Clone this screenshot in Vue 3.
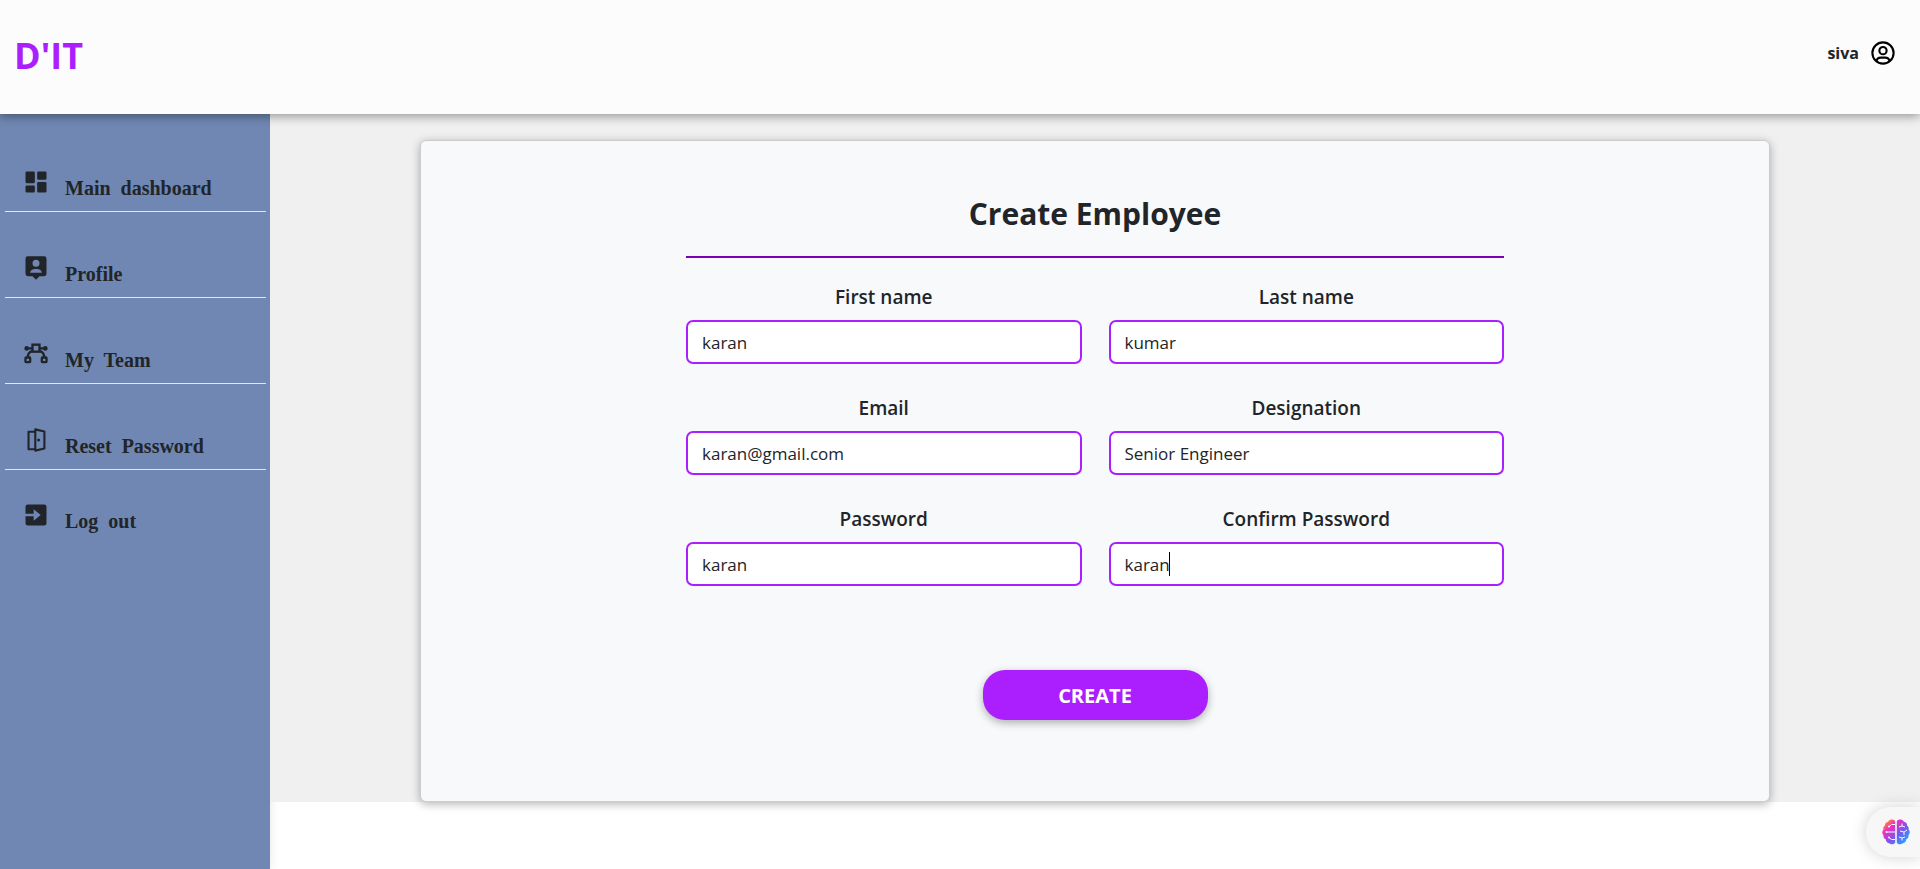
<script setup>
import { ref } from 'vue'

const menu = [
  { label: 'Main  dashboard', icon: 'dashboard' },
  { label: 'Profile', icon: 'profile' },
  { label: 'My  Team', icon: 'team' },
  { label: 'Reset  Password', icon: 'door' },
  { label: 'Log  out', icon: 'logout' }
]

const fields = ref([
  { id: 'first-name', label: 'First name', value: 'karan' },
  { id: 'last-name', label: 'Last name', value: 'kumar' },
  { id: 'email', label: 'Email', value: 'karan@gmail.com' },
  { id: 'designation', label: 'Designation', value: 'Senior Engineer' },
  { id: 'password', label: 'Password', value: 'karan' },
  { id: 'confirm-password', label: 'Confirm Password', value: 'karan', active: true }
])
</script>

<template>
  <div class="page">
    <header class="topbar">
      <a class="logo" href="#">D'IT</a>
      <div class="user">
        <span>siva</span>
        <svg class="icon" viewBox="0 0 24 24" fill="none" stroke="#000" stroke-width="1.8" aria-hidden="true">
          <circle cx="12" cy="12" r="9.1" />
          <circle cx="12" cy="10" r="3.1" />
          <path d="M6.4 18.6C6.9 16.9 8.2 16 10 16h4c1.8 0 3.1.9 3.6 2.6" />
        </svg>
      </div>
    </header>

    <div class="body">
      <nav class="sidebar">
        <ul>
          <li v-for="item in menu" :key="item.icon">
            <a href="#">
              <svg class="icon" viewBox="0 0 24 24" fill="currentColor" aria-hidden="true">
                <path v-if="item.icon === 'dashboard'" d="M4 13h6a1 1 0 0 0 1-1V4a1 1 0 0 0-1-1H4a1 1 0 0 0-1 1v8a1 1 0 0 0 1 1zm-1 7a1 1 0 0 0 1 1h6a1 1 0 0 0 1-1v-4a1 1 0 0 0-1-1H4a1 1 0 0 0-1 1v4zm10 0a1 1 0 0 0 1 1h6a1 1 0 0 0 1-1v-7a1 1 0 0 0-1-1h-6a1 1 0 0 0-1 1v7zm1-10h6a1 1 0 0 0 1-1V4a1 1 0 0 0-1-1h-6a1 1 0 0 0-1 1v5a1 1 0 0 0 1 1z" />
                <path v-else-if="item.icon === 'profile'" fill-rule="evenodd" d="M5 2h14a2 2 0 0 1 2 2v13a2 2 0 0 1-2 2h-4l-3 3-3-3H5a2 2 0 0 1-2-2V4a2 2 0 0 1 2-2zM12 5a3 3 0 1 0 0 6 3 3 0 0 0 0-6zM7 16h10c0-1.9-2.2-3.2-5-3.2S7 14.1 7 16z" />
                <g v-else-if="item.icon === 'team'" fill="none" stroke="currentColor" stroke-width="2">
                  <rect x="9" y="4" width="6" height="6" />
                  <rect x="3" y="15" width="4" height="4" rx="0.5" />
                  <rect x="17" y="15" width="4" height="4" rx="0.5" />
                  <path d="M4 7.2h5M15 7.2h5M5 15c0-3.2 1.4-5 4.2-5.6M19 15c0-3.2-1.4-5-4.2-5.6" />
                  <circle cx="4" cy="7.2" r="1" />
                  <circle cx="20" cy="7.2" r="1" />
                </g>
                <g v-else-if="item.icon === 'door'">
                  <path fill="none" stroke="currentColor" stroke-width="1.8" stroke-linejoin="round" d="M11 4.9H5.6v15H11M11.400 2.900l7.800 1.800v14.600l-7.800 1.800z" />
                  <circle cx="14.200" cy="12" r="1.300" />
                </g>
                <path v-else fill-rule="evenodd" d="M5 3h14a2 2 0 0 1 2 2v14a2 2 0 0 1-2 2H5a2 2 0 0 1-2-2v-6h7v4l6-5-6-5v4H3V5a2 2 0 0 1 2-2z" />
              </svg>
              <span>{{ item.label }}</span>
            </a>
          </li>
        </ul>
      </nav>

      <main>
        <form class="card" @submit.prevent>
          <div class="content">
            <h1>Create Employee</h1>
            <div class="fields">
              <div v-for="field in fields" :key="field.id" class="field">
                <label :for="field.id">{{ field.label }}</label>
                <div class="control">
                  <input :id="field.id" v-model="field.value" type="text" />
                  <span v-if="field.active" class="caret" />
                </div>
              </div>
            </div>
            <button class="create" type="submit">CREATE</button>
          </div>
        </form>
      </main>
    </div>

    <button class="assistant" type="button" aria-label="Assistant">
      <svg viewBox="0 0 28 26" aria-hidden="true">
        <defs>
          <linearGradient id="brain" x1="0" y1="0" x2="1" y2="1">
            <stop offset="0.08" stop-color="#ff9a1f" />
            <stop offset="0.3" stop-color="#f02fc2" />
            <stop offset="0.58" stop-color="#7c55ee" />
            <stop offset="0.9" stop-color="#20a8ff" />
          </linearGradient>
        </defs>
        <path fill="url(#brain)" d="M13.2 2.500C12.800.9 11 .2 9.300.6 7.700.8 6.700 1.500 6.200 2.700 4 3 2.600 4.500 2.900 6.700 1.300 7.700.9 9.300 1.500 10.500-.2 12-.1 14.700 1.500 16c-.4 2 .5 3.600 2.200 4.200.2 2.500 2 4 4 4.200 1.800 1.500 4.900 1.100 5.500-1.200zM14.800 2.500c.4-1.600 2.200-2.300 3.900-1.900 1.600.2 2.600.9 3.100 2.100 2.200.3 3.600 1.800 3.300 4 1.600 1 2 2.600 1.400 3.800 1.700 1.500 1.600 4.200 0 5.500.4 2-.5 3.600-2.200 4.200-.2 2.500-2 4-4 4.200-1.800 1.500-4.900 1.100-5.500-1.200z" />
        <g fill="none" stroke="#f7f7f7" stroke-width="1">
          <path d="M13.2 5.500H9.500L7 7.800M13.200 13H4.500M13.200 20.500H9.500L7 18.500M17 8l3-1 3 1M20 7V4.500M18 12l4 1 3-2M22 13v3M17 18l3 1 3-1M20 19v2.500" />
        </g>
        <g fill="#f7f7f7"><circle cx="7" cy="7.5" r="1" /><circle cx="4.5" cy="13" r="1" /><circle cx="7" cy="18.5" r="1" /></g>
      </svg>
    </button>
  </div>
</template>

<style>
body {
  background: #fff;
}
</style>

<style scoped>
.page {
  display: flex;
  flex-direction: column;
  min-height: 100vh;
  color: #212529;
  font-family: "Open Sans", "Noto Sans", sans-serif;
}
.page * {
  box-sizing: border-box;
}
.icon {
  width: 28px;
  height: 28px;
  flex: none;
}
.topbar {
  position: relative;
  z-index: 1;
  display: flex;
  justify-content: space-between;
  align-items: center;
  min-height: 114px;
  padding: 0 23px 2px 14px;
  background: #fcfcfc;
  box-shadow: 0 2px 10px rgba(0, 0, 0, 0.4);
}
.logo {
  color: #ab1fff;
  font-size: 36px;
  line-height: 48px;
  font-weight: 700;
  text-decoration: none;
}
.user {
  display: flex;
  align-items: center;
  gap: 10px;
  padding-bottom: 6px;
  font-size: 16px;
  line-height: 24px;
  font-weight: 700;
}
.body {
  display: flex;
  flex: 1;
}
.sidebar {
  flex: none;
  width: 270px;
  padding: 12px 4px 0 5px;
  background: #6f87b2;
  box-shadow: 0 0 10px rgba(0, 0, 0, 0.1);
}
.sidebar ul {
  margin: 0;
  padding: 0;
  list-style: none;
}
.sidebar a {
  display: flex;
  align-items: flex-end;
  gap: 15px;
  height: 86px;
  padding: 0 17px 7px;
  border-bottom: 1px solid #e4e6ea;
  color: #212529;
  font-family: "Liberation Serif", serif;
  font-size: 20px;
  line-height: 32px;
  font-weight: 700;
  text-decoration: none;
  white-space: pre;
}
.sidebar a .icon {
  margin-bottom: 8px;
}
.sidebar li:last-child a {
  height: 74px;
  border-bottom: 0;
}
main {
  flex: 1;
  align-self: flex-start;
  padding: 26px 150px 0;
  background: #f0f0f0;
}
.card {
  padding: 54px 24px 81px;
  border: 1px solid #ccc;
  border-radius: 6px;
  background: #f8f9fb;
  box-shadow: 0 2px 10px rgba(0, 0, 0, 0.3);
}
.content {
  display: flex;
  flex-direction: column;
  max-width: 818px;
  margin: 0 auto;
}
h1 {
  margin: 0 0 25px;
  padding-bottom: 23px;
  border-bottom: 2px solid #7b00b8;
  font-size: 30px;
  line-height: 38px;
  font-weight: 700;
  text-align: center;
}
.fields {
  display: grid;
  grid-template-columns: 1fr 1fr;
  gap: 30px 27px;
}
.field {
  display: flex;
  flex-direction: column;
  gap: 9px;
}
label {
  font-size: 19px;
  line-height: 28px;
  font-weight: 600;
  text-align: center;
}
.control {
  position: relative;
}
input {
  display: block;
  width: 100%;
  height: 44px;
  padding: 0 14px;
  border: 2px solid #ab1fff;
  border-radius: 7px;
  outline: 0;
  background: #fff;
  color: #212529;
  font-family: inherit;
  font-size: 17px;
  font-weight: 400;
}
.caret {
  position: absolute;
  top: 10px;
  left: 60px;
  width: 1px;
  height: 24px;
  background: #000;
}
.create {
  align-self: center;
  width: 225px;
  height: 50px;
  margin-top: 84px;
  padding: 0;
  border: 0;
  border-radius: 22px;
  background: #ab1fff;
  box-shadow: 0 3px 8px rgba(0, 0, 0, 0.3);
  color: #fff;
  font-family: inherit;
  font-size: 20px;
  font-weight: 700;
}
.assistant {
  position: fixed;
  right: 0;
  bottom: 12px;
  z-index: 2;
  width: 54px;
  height: 50px;
  padding: 0 0 0 16px;
  border: 0;
  border-radius: 25px 0 0 25px;
  background: #f7f7f7;
  box-shadow: 0 0 16px rgba(0, 0, 0, 0.18);
}
.assistant svg {
  display: block;
  width: 28px;
  height: 26px;
}
</style>
